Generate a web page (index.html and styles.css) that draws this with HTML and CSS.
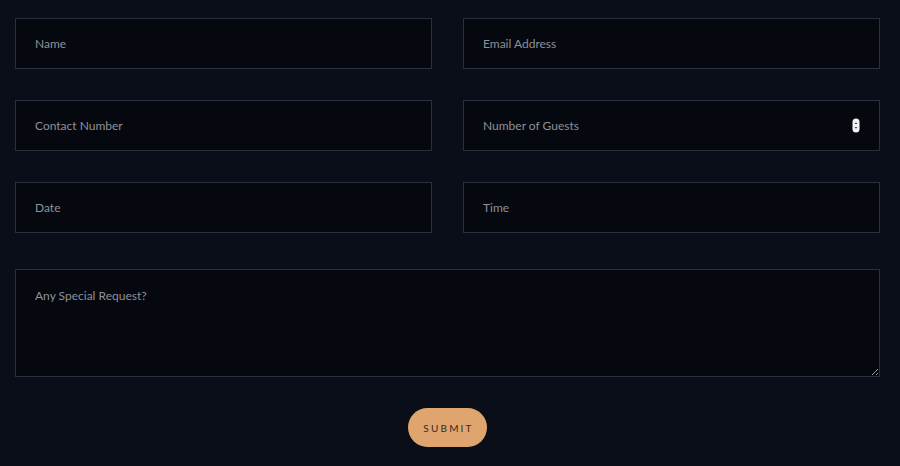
FILE: index.html
```html
<!DOCTYPE html>
<html>
<head>
<meta charset="utf-8">
<link rel="stylesheet" href="styles.css">
</head>
<body>
<form class="form">
  <div class="grid">
    <input class="field" type="text" placeholder="Name">
    <input class="field" type="email" placeholder="Email Address">
    <input class="field" type="text" placeholder="Contact Number">
    <div class="num-wrap">
      <input class="field number" type="number" placeholder="Number of Guests">
      <svg class="spin" width="8" height="15" viewBox="0 0 8 15">
        <rect x="0.5" y="0.5" width="7" height="14" rx="3.5" fill="#f2f3f5"/>
        <path d="M2.6 6 L4 4.3 L5.4 6 Z" fill="#3a3d44"/>
        <path d="M2.6 9 L4 10.7 L5.4 9 Z" fill="#3a3d44"/>
      </svg>
    </div>
    <input class="field" type="text" placeholder="Date">
    <input class="field" type="text" placeholder="Time">
  </div>
  <textarea class="field area" placeholder="Any Special Request?"></textarea>
  <div class="actions">
    <button class="submit" type="button">SUBMIT</button>
  </div>
</form>
</body>
</html>
```
FILE: styles.css
```css
html, body {
  margin: 0;
  background: #0a0e18;
  color-scheme: dark;
}
body {
  font-family: "Source Sans Pro", Lato, "Noto Sans", sans-serif;
}
.form {
  padding: 18px 20px 0 15px;
}
.grid {
  display: grid;
  grid-template-columns: 1fr 1fr;
  column-gap: 31px;
  row-gap: 31px;
}
.field {
  box-sizing: border-box;
  height: 51px;
  width: 100%;
  margin: 0;
  background: #05080f;
  border: 1px solid #2a2f3b;
  border-radius: 0;
  padding: 0 19px;
  color: #c8ccd4;
  font-family: inherit;
  font-size: 12px;
  outline: none;
}
.field::placeholder {
  color: #8e9198;
}
.num-wrap {
  position: relative;
}
.number {
  display: block;
  -moz-appearance: textfield;
}
.number::-webkit-inner-spin-button,
.number::-webkit-outer-spin-button {
  -webkit-appearance: none;
  margin: 0;
}
.spin {
  position: absolute;
  right: 20px;
  top: 18px;
}
.area {
  display: block;
  margin-top: 36px;
  height: 108px;
  padding: 18px 19px;
  resize: vertical;
}
.actions {
  display: flex;
  justify-content: center;
  margin-top: 31px;
}
.submit {
  width: 79px;
  height: 39px;
  border: none;
  border-radius: 20px;
  background: #e0a56f;
  color: #3a2a1c;
  font-family: inherit;
  font-size: 10px;
  letter-spacing: 2.2px;
  padding: 0 0 0 2px;
}
```
